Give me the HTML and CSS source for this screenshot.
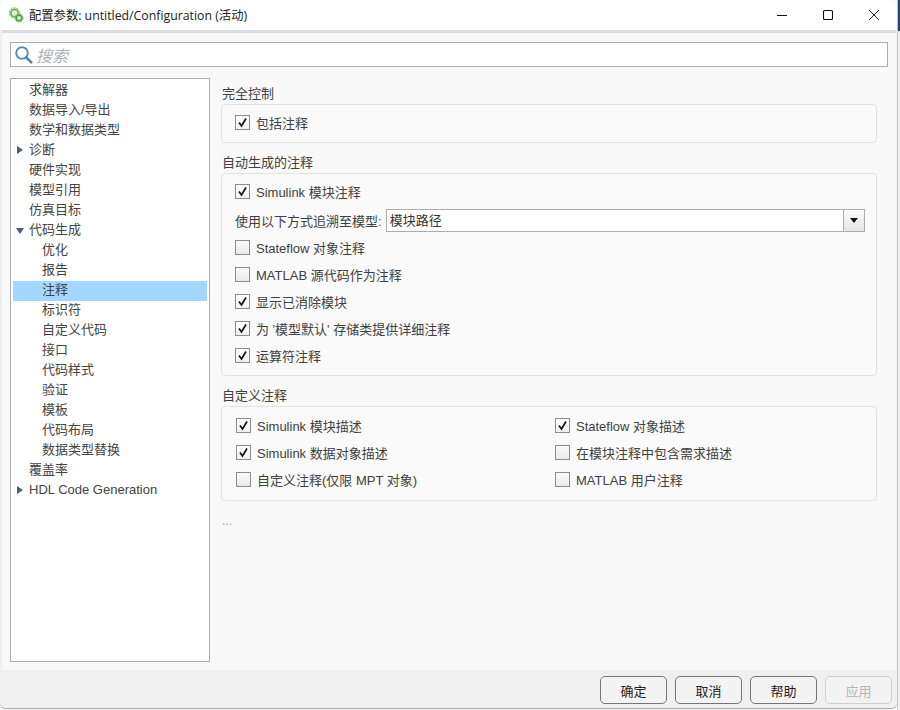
FILE: index.html
```html
<!DOCTYPE html>
<html lang="zh">
<head>
<meta charset="utf-8">
<title>配置参数</title>
<link rel="stylesheet" href="styles.css">
</head>
<body>
<div class="window">
  <header class="titlebar">
    <svg class="app-icon" width="16" height="16" viewBox="0 0 16 16">
      <circle cx="6.500" cy="6" r="5" fill="none" stroke="#a5d48c" stroke-width="1.600" stroke-dasharray="2.400 .7"/>
      <circle cx="6.500" cy="6" r="3.600" fill="#e4f2d8" stroke="#5fa858" stroke-width="1.500"/>
      <circle cx="11" cy="11" r="3.900" fill="none" stroke="#93cb78" stroke-width="1.500" stroke-dasharray="2 .7"/>
      <circle cx="11" cy="11" r="2.800" fill="#dcedcd" stroke="#4f9a50" stroke-width="1.400"/>
    </svg>
    <span class="title">配置参数: untitled/Configuration (活动)</span>
    <div class="win-controls">
      <svg width="12" height="12" viewBox="0 0 12 12"><path d="M1 6.500h10" stroke="#111" fill="none"/></svg>
      <svg width="12" height="12" viewBox="0 0 12 12"><rect x="1.500" y="1.500" width="9" height="9" rx="1" stroke="#111" stroke-width="1.100" fill="none"/></svg>
      <svg width="12" height="12" viewBox="0 0 12 12"><path d="M1 1l10 10M11 1L1 11" stroke="#222" fill="none"/></svg>
    </div>
  </header>
  <main class="main">
    <div class="search">
      <svg class="search-icon" width="19" height="19" viewBox="0 0 19 19"><circle cx="8" cy="8" r="5.800" fill="none" stroke="#5b8db8" stroke-width="2"/><path d="M12.300 12.300l5 5" stroke="#4f7fa8" stroke-width="2.600" stroke-linecap="round"/></svg>
      <span class="search-text">搜索</span>
    </div>
    <div class="content">
      <nav class="tree">
        <div class="node l1">求解器</div>
        <div class="node l1">数据导入/导出</div>
        <div class="node l1">数学和数据类型</div>
        <div class="node l1"><span class="tri-right"></span>诊断</div>
        <div class="node l1">硬件实现</div>
        <div class="node l1">模型引用</div>
        <div class="node l1">仿真目标</div>
        <div class="node l1"><span class="tri-down"></span>代码生成</div>
        <div class="node l2">优化</div>
        <div class="node l2">报告</div>
        <div class="node l2 selected">注释</div>
        <div class="node l2">标识符</div>
        <div class="node l2">自定义代码</div>
        <div class="node l2">接口</div>
        <div class="node l2">代码样式</div>
        <div class="node l2">验证</div>
        <div class="node l2">模板</div>
        <div class="node l2">代码布局</div>
        <div class="node l2">数据类型替换</div>
        <div class="node l1">覆盖率</div>
        <div class="node l1"><span class="tri-right"></span>HDL Code Generation</div>
      </nav>
      <section class="panel">
        <div class="group-label">完全控制</div>
        <div class="box">
          <div class="row"><span class="cb on"><svg width="13" height="13" viewBox="0 0 13 13"><path d="M3 6.500l2.500 3.500L10 2.500" fill="none" stroke="#111" stroke-width="1.700"/></svg></span>包括注释</div>
        </div>
        <div class="group-label">自动生成的注释</div>
        <div class="box">
          <div class="row"><span class="cb on"><svg width="13" height="13" viewBox="0 0 13 13"><path d="M3 6.500l2.500 3.500L10 2.500" fill="none" stroke="#111" stroke-width="1.700"/></svg></span>Simulink 模块注释</div>
          <div class="row combo-row">
            <span class="combo-label">使用以下方式追溯至模型:</span>
            <div class="combo"><span class="combo-value">模块路径</span><span class="combo-btn"><span class="tri-combo"></span></span></div>
          </div>
          <div class="row"><span class="cb"></span>Stateflow 对象注释</div>
          <div class="row"><span class="cb"></span>MATLAB 源代码作为注释</div>
          <div class="row"><span class="cb on"><svg width="13" height="13" viewBox="0 0 13 13"><path d="M3 6.500l2.500 3.500L10 2.500" fill="none" stroke="#111" stroke-width="1.700"/></svg></span>显示已消除模块</div>
          <div class="row"><span class="cb on"><svg width="13" height="13" viewBox="0 0 13 13"><path d="M3 6.500l2.500 3.500L10 2.500" fill="none" stroke="#111" stroke-width="1.700"/></svg></span>为 '模型默认' 存储类提供详细注释</div>
          <div class="row"><span class="cb on"><svg width="13" height="13" viewBox="0 0 13 13"><path d="M3 6.500l2.500 3.500L10 2.500" fill="none" stroke="#111" stroke-width="1.700"/></svg></span>运算符注释</div>
        </div>
        <div class="group-label">自定义注释</div>
        <div class="box grid-box">
          <div class="row"><span class="cb on"><svg width="13" height="13" viewBox="0 0 13 13"><path d="M3 6.500l2.500 3.500L10 2.500" fill="none" stroke="#111" stroke-width="1.700"/></svg></span>Simulink 模块描述</div>
          <div class="row"><span class="cb on"><svg width="13" height="13" viewBox="0 0 13 13"><path d="M3 6.500l2.500 3.500L10 2.500" fill="none" stroke="#111" stroke-width="1.700"/></svg></span>Stateflow 对象描述</div>
          <div class="row"><span class="cb on"><svg width="13" height="13" viewBox="0 0 13 13"><path d="M3 6.500l2.500 3.500L10 2.500" fill="none" stroke="#111" stroke-width="1.700"/></svg></span>Simulink 数据对象描述</div>
          <div class="row"><span class="cb"></span>在模块注释中包含需求描述</div>
          <div class="row"><span class="cb"></span>自定义注释(仅限 MPT 对象)</div>
          <div class="row"><span class="cb"></span>MATLAB 用户注释</div>
        </div>
        <div class="ellipsis">...</div>
      </section>
    </div>
  </main>
  <footer class="footer">
    <button class="btn">确定</button>
    <button class="btn">取消</button>
    <button class="btn">帮助</button>
    <button class="btn disabled">应用</button>
  </footer>
</div>
<div class="backdrop"></div>
</body>
</html>
```
FILE: styles.css
```css
* { box-sizing: border-box; }
html, body { margin: 0; padding: 0; }
body {
  width: 900px;
  height: 710px;
  overflow: hidden;
  display: flex;
  align-items: flex-start;
  background: #fbfbfb;
  font-family: "Liberation Sans", "Noto Sans CJK SC", sans-serif;
  font-size: 13px;
  color: #404040;
}
.backdrop {
  flex: 1;
  height: 100%;
  border-left: 1px solid #c6c6c6;
  background: linear-gradient(#1c4a75 0, #1c4a75 31px, #f1f1f1 31px);
}
.window {
  width: 897px;
  height: 708px;
  flex: none;
  display: flex;
  flex-direction: column;
  background: #f0f0f0;
  border-radius: 8px 8px 6px 6px;
  box-shadow: 0 1px 1px rgba(0, 0, 0, 0.35);
  overflow: hidden;
}
.titlebar {
  height: 30px;
  flex: none;
  display: flex;
  align-items: center;
  padding: 0 0 1px 8px;
  background: #fff;
}
.app-icon { flex: none; margin-right: 5px; }
.title {
  font-family: "Open Sans", "Noto Sans CJK SC", sans-serif;
  font-size: 12.3px;
  color: #222;
}
.win-controls {
  margin-left: auto;
  display: flex;
  gap: 34px;
  padding-right: 17px;
  align-items: center;
}
.main {
  flex: 1;
  min-height: 0;
  display: flex;
  flex-direction: column;
  gap: 11px;
  margin: 0 1px 0 2px;
  padding: 9px 8px 8px 8px;
  background: #f9f9f9;
  border-top: 3px solid #dcdcdc;
}
.search {
  height: 25px;
  flex: none;
  display: flex;
  align-items: center;
  gap: 3px;
  padding-left: 3px;
  background: #fff;
  border: 1px solid #adadad;
}
.search-text {
  font-style: italic;
  font-size: 16px;
  color: #adb2b6;
}
.content {
  flex: 1;
  min-height: 0;
  display: flex;
  gap: 11px;
}
.tree {
  width: 200px;
  flex: none;
  padding: 2px;
  background: #fff;
  border: 1px solid #adadad;
}
.node {
  height: 20px;
  line-height: 18px;
  position: relative;
  white-space: nowrap;
  color: #444;
}
.l1 { padding-left: 16px; }
.l2 { padding-left: 29px; }
.selected { background: #a3d7ff; }
.tri-right {
  position: absolute;
  left: 4px;
  top: 5px;
  border-left: 6px solid #4a5f78;
  border-top: 4.500px solid transparent;
  border-bottom: 4.500px solid transparent;
}
.tri-down {
  position: absolute;
  left: 3px;
  top: 7px;
  border-top: 6px solid #4a5f78;
  border-left: 4.500px solid transparent;
  border-right: 4.500px solid transparent;
}
.panel {
  width: 656px;
  flex: none;
  padding-top: 7px;
}
.group-label {
  height: 18px;
  line-height: 18px;
  margin: 11px 0 1px 1px;
  color: #404040;
}
.group-label:first-child { margin-top: 0; }
.box {
  padding: 4px 11px 6px 13px;
  background: #fafafa;
  border: 1px solid #e3e3e3;
  border-radius: 4px;
}
.row {
  height: 27px;
  display: flex;
  align-items: center;
  white-space: nowrap;
}
.cb {
  width: 15px;
  height: 15px;
  flex: none;
  margin-right: 6px;
  display: flex;
  align-items: center;
  justify-content: center;
  border: 1px solid #8c8c8c;
  background: linear-gradient(#fbfbfb, #e9e9e9);
}
.cb.on { background: linear-gradient(#ffffff, #f0f0f0); }
.combo-row { margin: 2px 0 0; }
.combo-label { margin-right: 4px; }
.combo {
  flex: 1;
  height: 23px;
  display: flex;
  background: #fff;
  border: 1px solid #adadad;
}
.combo-value {
  flex: 1;
  padding-left: 3px;
  line-height: 21px;
  color: #333;
}
.combo-btn {
  width: 21px;
  flex: none;
  display: flex;
  align-items: center;
  justify-content: center;
  border-left: 1px solid #adadad;
  background: linear-gradient(#fafafa, #e6e6e6);
}
.tri-combo {
  border-top: 5px solid #111;
  border-left: 4px solid transparent;
  border-right: 4px solid transparent;
}
.grid-box {
  display: grid;
  grid-template-columns: 319px 1fr;
  padding-top: 5px;
  padding-bottom: 7px;
  padding-left: 14px;
}
.ellipsis {
  margin: 12px 0 0 1px;
  color: #999;
  font-size: 12px;
  line-height: 16px;
}
.footer {
  height: 38px;
  flex: none;
  display: flex;
  justify-content: flex-end;
  align-items: flex-start;
  gap: 8px;
  padding: 6px 5px 0 0;
  background: #f0f0f0;
}
.btn {
  width: 67px;
  height: 28px;
  padding: 0;
  font: inherit;
  color: #222;
  background: #f3f3f3;
  border: 1px solid #767676;
  border-radius: 5px;
}
.btn.disabled {
  color: #b5b5b5;
  border-color: #cfcfcf;
}
```
